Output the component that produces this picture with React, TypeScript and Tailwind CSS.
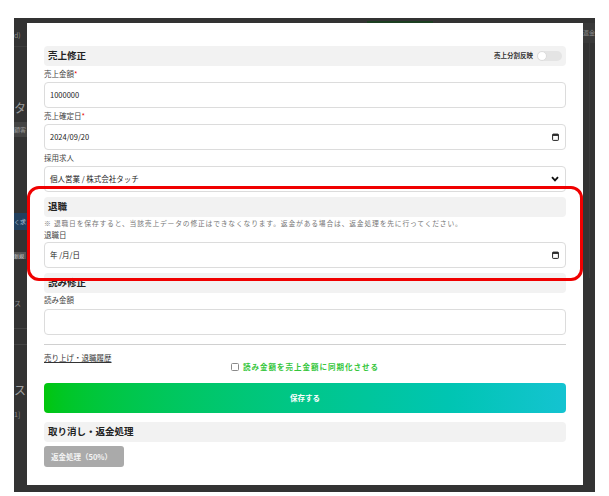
import { ReactNode } from "react";

const font = { fontFamily: '"Noto Sans CJK JP", "Noto Sans", sans-serif' };

function SectionBar({ title, children, mt }: { title: string; children?: ReactNode; mt: string }) {
  return (
    <div className={`${mt} h-[20px] rounded-[4px] bg-[#f2f2f2] flex items-center justify-between pl-[4px] pr-[4px]`}>
      <div className="text-[9.5px] leading-none font-bold text-[#222]">{title}</div>
      {children}
    </div>
  );
}

function Label({ text, required, mt }: { text: string; required?: boolean; mt: string }) {
  return (
    <div className={`${mt} h-[10px] text-[7.5px] leading-[10px] text-[#444]`}>
      {text}
      {required && <span className="text-[#e60000]">*</span>}
    </div>
  );
}

function Field({ children, mt, right }: { children?: ReactNode; mt: string; right?: ReactNode }) {
  return (
    <div className={`${mt} h-[26px] rounded-[4px] border border-[#dcdcdc] bg-white flex items-center justify-between pl-[5px] pr-[6px] text-[7.5px] text-[#222]`}>
      <span>{children}</span>
      {right}
    </div>
  );
}

function CalendarIcon() {
  return (
    <svg width="7" height="8" viewBox="0 0 7 8">
      <rect x="0.6" y="1.1" width="5.8" height="6.3" rx="0.6" fill="none" stroke="#222" strokeWidth="1" />
      <rect x="0.6" y="1.1" width="5.8" height="1.8" fill="#222" />
    </svg>
  );
}

function Chevron() {
  return (
    <svg width="8" height="6" viewBox="0 0 8 6">
      <path d="M1 1.2 L4 4.4 L7 1.2" fill="none" stroke="#111" strokeWidth="1.8" />
    </svg>
  );
}

export default function App() {
  return (
    <div className="w-[609px] h-[496px] bg-white pt-[18px] pl-[14px]" style={font}>
      <div className="w-[581px] h-[474px] bg-[#333333] flex flex-col">
        <div className="h-[5px] flex">
          <div className="ml-[353px] mt-[3px] w-[66px] h-[2px] bg-[#1d3f22]" />
        </div>
        <div className="flex">
          {/* left strip: dimmed page behind */}
          <div className="w-[13px] h-[462px] overflow-hidden flex flex-col text-[#8a8a8a]">
            <div className="mt-[7px] h-[10px] text-[7px] leading-[10px] whitespace-nowrap">d)</div>
            <div className="mt-[6px] h-px bg-[#3e3e3e]" />
            <div className="mt-[52px] h-[17px] text-[12px] leading-[17px] text-[#9a9a9a] whitespace-nowrap">タ</div>
            <div className="mt-[6px] h-[15px] bg-[#444] text-[6px] leading-[15px] text-[#999] whitespace-nowrap">顧客</div>
            <div className="mt-[76px] h-[17px] bg-[#22405e] text-[6px] leading-[17px] text-[#a9bcd0] whitespace-nowrap">く求</div>
            <div className="mt-[22px] h-[7px] w-[12px] bg-[#555] text-[5px] leading-[7px] text-[#ccc] whitespace-nowrap">新規</div>
            <div className="mt-[40px] h-[9px] text-[7px] leading-[9px] whitespace-nowrap">ス</div>
            <div className="mt-[20px] h-px bg-[#444]" />
            <div className="mt-[15px] h-px bg-[#444]" />
            <div className="mt-[36px] h-[18px] text-[12px] leading-[18px] text-[#a0a0a0] whitespace-nowrap">ス</div>
            <div className="mt-[10px] h-[10px] text-[7px] leading-[10px] whitespace-nowrap">1]</div>
          </div>

          {/* modal */}
          <div className="relative w-[556px] h-[462px] bg-white flex flex-col px-[17px] pt-[23px]">
            <SectionBar title="売上修正" mt="mt-0">
              <div className="flex items-center gap-[4px]">
                <span className="text-[6.5px] font-bold text-[#333]">売上分割反映</span>
                <div className="w-[25px] h-[10px] rounded-full bg-[#e4e4e4] flex items-center">
                  <div className="w-[10px] h-[10px] rounded-full bg-white border border-[#dcdcdc]" />
                </div>
              </div>
            </SectionBar>
            <Label text="売上金額" required mt="mt-[3px]" />
            <Field mt="mt-[3px]">1000000</Field>
            <Label text="売上確定日" required mt="mt-[3px]" />
            <Field mt="mt-[3px]" right={<CalendarIcon />}>2024/09/20</Field>
            <Label text="採用求人" mt="mt-[3px]" />
            <Field mt="mt-[3px]" right={<Chevron />}>個人営業 / 株式会社タッチ</Field>

            <SectionBar title="退職" mt="mt-[5px]" />
            <div className="mt-[2px] h-[8px] text-[6.8px] leading-[8px] text-[#777] tracking-[0.8px] whitespace-nowrap">
              ※ 退職日を保存すると、当該売上データの修正はできなくなります。返金がある場合は、返金処理を先に行ってください。
            </div>
            <Label text="退職日" mt="mt-[3px]" />
            <Field mt="mt-[2px]" right={<CalendarIcon />}>年 /月/日</Field>

            <SectionBar title="読み修正" mt="mt-[5px]" />
            <Label text="読み金額" mt="mt-[2px]" />
            <Field mt="mt-[4px]" />

            <div className="mt-[9px] h-px bg-[#d0d0d0]" />
            <div className="mt-[8px] h-[9px] text-[7.5px] leading-[9px] text-[#333] underline">売り上げ・退職履歴</div>
            <div className="h-[10px] flex items-center justify-center gap-[4px]">
              <div className="w-[8px] h-[8px] border border-[#8a8a8a] rounded-[1.5px] bg-white" />
              <span className="text-[7.5px] font-bold text-[#35c63c] tracking-[1px]">読み金額を売上金額に同期化させる</span>
            </div>

            <div className="mt-[11px] h-[30px] rounded-[4px] bg-linear-to-r from-[#02c60a] to-[#14c3d1] flex items-center justify-center">
              <span className="text-[7.5px] font-bold text-white">保存する</span>
            </div>

            <SectionBar title="取り消し・返金処理" mt="mt-[9px]" />
            <div className="mt-[4px] w-[80px] h-[21px] rounded-[3px] bg-[#aaaaaa] flex items-center pl-[7px]">
              <span className="text-[7.5px] font-bold text-[#f4f4f4] whitespace-nowrap">返金処理（50%）</span>
            </div>

            {/* red annotation frame */}
            <div className="absolute left-0 top-[163px] w-[556px] h-[95px] border-[3px] border-[#f00000] rounded-[12px] pointer-events-none" />
          </div>

          {/* right strip */}
          <div className="w-[12px] h-[462px] overflow-hidden flex flex-col">
            <div className="h-[20px] bg-[#3a3a3a] text-[6px] leading-[20px] text-[#8a8a8a] whitespace-nowrap">返金</div>
            <div className="ml-[6px] w-px h-[235px] bg-[#3c3c3c]" />
          </div>
        </div>
      </div>
    </div>
  );
}
